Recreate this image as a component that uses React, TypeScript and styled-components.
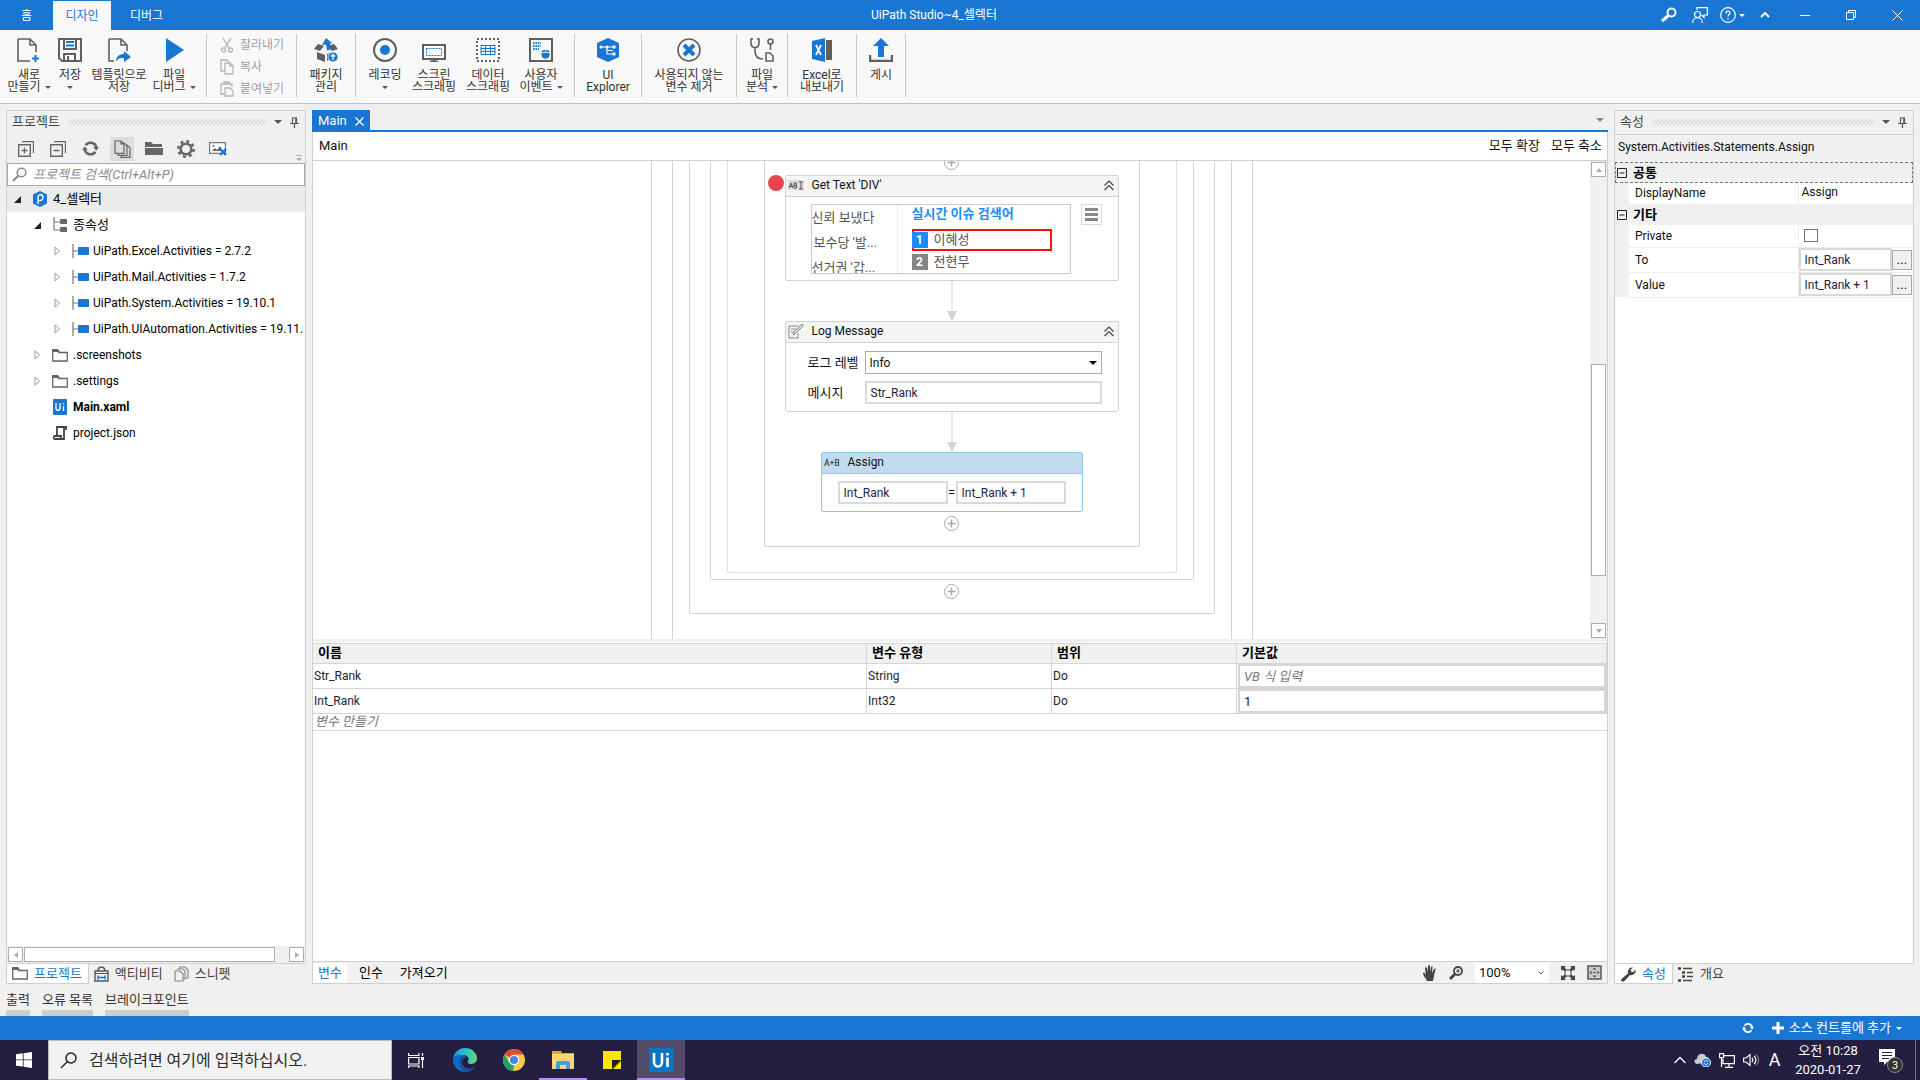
import React from "react";
import styled, { createGlobalStyle, css } from "styled-components";

const blue = "#1976d2";
const dark = "#5f5f5f";
const line = "#cfcfcf";
const panelBg = "#f0f0f0";
const ui = `Roboto, "Noto Sans CJK KR", sans-serif`;
const latin = css`font-size: 12px;`;

const Global = createGlobalStyle`
  * { box-sizing: border-box; }
  body { margin: 0; background: ${panelBg}; font-family: ${ui}; font-size: 13px; line-height: 16px; color: #111; }
  button, input, select { font: inherit; color: inherit; margin: 0; padding: 0; border: 0; background: none; border-radius: 0; outline: none; }
  button { white-space: nowrap; }
  svg { display: block; flex: none; }
  a { color: inherit; text-decoration: none; }
`;

const Page = styled.div`
  height: 100vh;
  display: flex;
  flex-direction: column;
  overflow: hidden;
  white-space: nowrap;
`;

/* ---------- title bar ---------- */
const TitleBar = styled.header`
  height: 30px;
  flex: none;
  display: flex;
  background: ${blue};
  color: #fff;
  font-size: 12px;
`;
const TitleTabs = styled.nav`
  display: flex;
  width: 213px;
  padding-top: 1px;
`;
const TitleTab = styled.button<{ $w: number; $on?: boolean }>`
  width: ${(p) => p.$w}px;
  text-align: center;
  ${(p) => p.$on && css`background: #f8f8f8; color: ${blue};`}
`;
const AppTitle = styled.h1`
  flex: 1;
  margin: 0;
  text-align: center;
  font-size: 12px;
  font-weight: 400;
  line-height: 30px;
`;
const TitleTools = styled.div`
  display: flex;
  align-items: center;
  width: 265px;
`;
const TitleTool = styled.button<{ $w: number }>`
  width: ${(p) => p.$w}px;
  height: 30px;
  display: flex;
  align-items: center;
  justify-content: center;
  gap: 3px;
`;

/* ---------- ribbon ---------- */
const Ribbon = styled.div`
  height: 74px;
  flex: none;
  display: flex;
  align-items: flex-start;
  background: #f8f8f8;
  border-bottom: 1px solid #bebebe;
  font-size: 12px;
  line-height: 12px;
  padding-top: 4px;
  color: #333;
`;
const RibbonGroup = styled.div<{ $l?: number; $r?: number }>`
  display: flex;
  height: 63px;
  padding: 0 ${(p) => p.$r ?? 0}px 0 ${(p) => p.$l ?? 0}px;
  border-right: 1px solid #c8c8c8;
`;
const RibbonBtn = styled.button<{ $w: number }>`
  width: ${(p) => p.$w}px;
  padding-top: 4px;
  display: flex;
  flex-direction: column;
  align-items: center;
  gap: 7px;
  line-height: 12px;
`;
const RibbonLabel = styled.span`
  display: flex;
  flex-direction: column;
  align-items: center;
`;
const LabelLine = styled.span`
  display: flex;
  align-items: center;
  height: 12px;
  gap: 4px;
`;
const ClipList = styled.div`
  display: flex;
  flex-direction: column;
  width: 89px;
  padding-left: 13px;
`;
const ClipBtn = styled.button`
  display: flex;
  flex: none;
  align-items: center;
  gap: 6px;
  height: 22px;
  color: #a0a0a0;
`;

/* ---------- workspace ---------- */
const Workspace = styled.main`
  flex: 1;
  min-height: 0;
  display: flex;
  gap: 6px;
  padding: 6px 6px 0;
`;
const SidePanel = styled.aside`
  width: 300px;
  flex: none;
  display: flex;
  flex-direction: column;
`;
const PanelBox = styled.section`
  flex: 1;
  min-height: 0;
  display: flex;
  flex-direction: column;
  border: 1px solid ${line};
  background: #fff;
`;
const PanelHead = styled.header`
  height: 23px;
  flex: none;
  display: flex;
  align-items: center;
  gap: 8px;
  padding: 0 6px 1px 5px;
  background: ${panelBg};
  color: #444;
`;
const Grip = styled.span`
  flex: 1;
  height: 6px;
  background-image: radial-gradient(circle, #a8a8a8 0.5px, transparent 0.8px), radial-gradient(circle, #a8a8a8 0.5px, transparent 0.8px);
  background-size: 4px 4px;
  background-position: 0 0, 2px 2px;
`;
const PanelTools = styled.div`
  height: 29px;
  flex: none;
  display: flex;
  align-items: center;
  padding: 0 3px 0 7px;
  background: ${panelBg};
`;
const PanelTool = styled.button<{ $on?: boolean }>`
  width: 24px;
  height: 24px;
  margin-right: 8px;
  display: flex;
  align-items: center;
  justify-content: center;
  background: ${(p) => (p.$on ? "#dcdcdc" : "transparent")};
`;
const ToolOverflow = styled.span`
  margin-left: auto;
  align-self: flex-end;
  padding-bottom: 2px;
`;
const SearchRow = styled.label`
  height: 23px;
  flex: none;
  display: flex;
  align-items: center;
  gap: 6px;
  padding-left: 4px;
  border: 1px solid #a8a8a8;
  background: #fff;
`;
const SearchInput = styled.input`
  flex: 1;
  min-width: 0;
  &::placeholder { color: #8a8a8a; font-style: italic; opacity: 1; }
`;
const Tree = styled.ul`
  flex: 1;
  min-height: 0;
  margin: 0;
  padding: 0;
  list-style: none;
  overflow: hidden;
`;
const TreeRow = styled.li<{ $level: number; $on?: boolean; $bold?: boolean; $latin?: boolean }>`
  height: 26px;
  display: flex;
  align-items: center;
  padding-left: ${(p) => 6 + p.$level * 20}px;
  background: ${(p) => (p.$on ? "#ebebeb" : "transparent")};
  font-weight: ${(p) => (p.$bold ? 700 : 400)};
  color: #000;
  ${(p) => p.$latin && latin}
`;
const TreeArrow = styled.span`
  width: 17px;
  flex: none;
  display: flex;
`;
const TreeIcon = styled.span`
  width: 23px;
  flex: none;
  display: flex;
  justify-content: center;
  padding-right: 3px;
`;
const HScroll = styled.div`
  height: 17px;
  flex: none;
  display: flex;
  gap: 1px;
  padding: 1px;
  background: ${panelBg};
`;
const ScrollBtn = styled.button`
  width: 15px;
  height: 15px;
  flex: none;
  display: flex;
  align-items: center;
  justify-content: center;
  border: 1px solid #acacac;
  background: #fff;
`;
const HTrack = styled.div`
  flex: 1;
  display: flex;
`;
const HThumb = styled.div`
  width: 95%;
  border: 1px solid #acacac;
  background: #fff;
`;
const DockTabs = styled.nav`
  height: 20px;
  flex: none;
  display: flex;
`;
const DockTab = styled.button<{ $on?: boolean }>`
  display: flex;
  align-items: center;
  gap: 6px;
  padding: 0 6px 0 5px;
  color: ${(p) => (p.$on ? blue : "#444")};
  ${(p) => p.$on && css`background: #fff; border: 1px solid ${line}; border-top: 0;`}
`;

/* ---------- designer ---------- */
const Center = styled.section`
  flex: 1;
  min-width: 0;
  display: flex;
  flex-direction: column;
`;
const DocTabs = styled.nav`
  height: 22px;
  flex: none;
  display: flex;
  align-items: center;
  justify-content: space-between;
  border-bottom: 2px solid ${blue};
  padding-right: 4px;
`;
const DocTab = styled.button`
  height: 22px;
  align-self: flex-start;
  display: flex;
  align-items: center;
  gap: 8px;
  padding: 0 6px;
  background: ${blue};
  color: #fff;
`;
const DocBody = styled.div`
  flex: 1;
  min-height: 0;
  display: flex;
  flex-direction: column;
  border: 1px solid ${line};
  border-top: 0;
  background: #fff;
`;
const Crumbs = styled.div`
  height: 29px;
  flex: none;
  display: flex;
  align-items: center;
  gap: 11px;
  padding: 0 5px 0 6px;
  border-bottom: 1px solid ${line};
`;
const CrumbMain = styled.a`
  margin-right: auto;
`;
const Designer = styled.div`
  height: 478px;
  flex: none;
  display: flex;
`;
const Canvas = styled.div`
  flex: 1;
  min-width: 0;
  overflow: hidden;
  display: flex;
  justify-content: center;
`;
const Scope = styled.div<{ $pad: number; $end?: number; $open?: boolean; $soft?: boolean }>`
  flex: none;
  display: flex;
  flex-direction: column;
  align-items: center;
  padding: 0 ${(p) => p.$pad}px ${(p) => p.$end ?? 0}px;
  border: 1px solid ${(p) => (p.$soft ? "#dedede" : "#d3d3d3")};
  border-top: 0;
  ${(p) => (p.$open ? css`border-bottom: 0; min-height: 100%;` : css`border-radius: 0 0 2px 2px;`)}
`;
const Steps = styled.div`
  width: 334px;
  margin-top: -6px;
  display: flex;
  flex-direction: column;
  align-items: center;
`;
const AddBtn = styled.button`
  display: flex;
  margin: 4px 0 5px;
`;
const FirstAdd = styled.button`
  display: flex;
  margin-bottom: 5px;
`;
const Card = styled.article<{ $sel?: boolean; $w?: string }>`
  position: relative;
  width: ${(p) => p.$w ?? "100%"};
  border: 1px solid ${(p) => (p.$sel ? "#94c3e3" : "#d3d3d3")};
  border-radius: 2px;
  background: #fff;
`;
const CardHead = styled.header<{ $sel?: boolean }>`
  height: 21px;
  display: flex;
  align-items: center;
  gap: 8px;
  padding: 0 4px 2px 2px;
  border-bottom: 1px solid ${(p) => (p.$sel ? "#94c3e3" : "#d3d3d3")};
  background: ${(p) => (p.$sel ? "#c1dcef" : "#f4f4f4")};
  color: #111;
  ${latin}
`;
const CardTitle = styled.span`
  flex: 1;
`;
const Breakpoint = styled.span`
  position: absolute;
  left: -18px;
  top: -1px;
  width: 16px;
  height: 16px;
  border-radius: 50%;
  background: #e8454f;
`;
const ShotBody = styled.div`
  display: flex;
  align-items: flex-start;
  gap: 10px;
  padding: 7px 16px 6px 25px;
`;
const Shot = styled.div`
  flex: 1;
  height: 70px;
  display: flex;
  overflow: hidden;
  border: 1px solid #cacaca;
  color: #555;
`;
const ShotNews = styled.div`
  width: 86px;
  flex: none;
  border-right: 1px solid #eee;
  line-height: 25px;
  overflow: hidden;
`;
const ShotCut = styled.div`
  text-indent: -10px;
`;
const ShotRank = styled.div`
  flex: 1;
  padding: 0 18px 0 14px;
`;
const ShotTitle = styled.div`
  color: #1a8cff;
  font-weight: 700;
  line-height: 18px;
  margin-bottom: 6px;
`;
const RankRow = styled.div<{ $hit?: boolean }>`
  height: 22px;
  display: flex;
  align-items: center;
  gap: 6px;
  ${(p) => (p.$hit ? css`box-shadow: inset 0 0 0 2px #f31212;` : "")}
`;
const RankNo = styled.b<{ $c: string }>`
  width: 16px;
  height: 16px;
  background: ${(p) => p.$c};
  color: #fff;
  font-size: 12px;
  line-height: 16px;
  text-align: center;
`;
const MenuBtn = styled.button`
  width: 21px;
  height: 21px;
  display: flex;
  align-items: center;
  justify-content: center;
  border: 1px solid #d5d9e4;
`;
const Connector = styled.div`
  height: 40px;
  display: flex;
`;
const LogBody = styled.div`
  display: grid;
  grid-template-columns: 57px 1fr;
  row-gap: 7px;
  align-items: center;
  padding: 8px 16px 7px 22px;
`;
const Field = styled.input`
  width: 100%;
  height: 23px;
  padding: 0 4px;
  border: 2px solid #d9d9d9;
  background: #fff;
  color: #24244a;
  ${latin}
`;
const SelectWrap = styled.span`
  display: flex;
  align-items: center;
  justify-content: flex-end;
  height: 23px;
  border: 1px solid #a8a8a8;
  padding-right: 4px;
`;
const LevelSelect = styled.select`
  flex: 1;
  height: 21px;
  padding-left: 4px;
  appearance: none;
  ${latin}
`;
const AssignBody = styled.div`
  display: grid;
  grid-template-columns: 1fr 8px 1fr;
  align-items: center;
  justify-items: center;
  padding: 7px 16px 7px;
`;

const VScroll = styled.div`
  width: 17px;
  flex: none;
  display: flex;
  flex-direction: column;
  padding: 1px;
  background: ${panelBg};
`;
const VTrack = styled.div`
  flex: 1;
  padding-top: 187px;
`;
const VThumb = styled.div`
  width: 15px;
  height: 212px;
  border: 1px solid #acacac;
  background: #fff;
`;
const Splitter = styled.div`
  height: 4px;
  flex: none;
  background: ${panelBg};
  border-bottom: 1px solid #fff;
`;

/* ---------- variables ---------- */
const VarTable = styled.table`
  width: 100%;
  table-layout: fixed;
  border-collapse: collapse;
  border-top: 1px solid ${line};
`;
const VarHead = styled.th`
  height: 20px;
  padding: 0 0 1px 5px;
  text-align: left;
  background: ${panelBg};
  border: 1px solid #d5d5d5;
  border-left: 0;
  color: #000;
`;
const VarCell = styled.td`
  height: 25px;
  padding: 0 0 0 1px;
  border: 1px solid #d5d5d5;
  border-left: 0;
  color: #223;
  ${latin}
`;
const VarInput = styled.input`
  display: block;
  width: 100%;
  height: 24px;
  padding: 0 4px;
  border: 2px solid #d5d5d5;
  font-size: 13px;
  &::placeholder { color: #777; font-style: italic; opacity: 1; }
`;
const VarNew = styled.td`
  height: 17px;
  padding: 0 0 0 2px;
  line-height: 14px;
  font-style: italic;
  color: #777;
  border-bottom: 1px solid #d5d5d5;
`;
const VarSpace = styled.div`
  flex: 1;
`;
const BottomBar = styled.div`
  height: 22px;
  flex: none;
  display: flex;
  align-items: center;
  background: ${panelBg};
  border-top: 1px solid ${line};
`;
const VarTab = styled.button<{ $on?: boolean }>`
  height: 20px;
  margin-right: 7px;
  padding: 0 5px;
  color: ${(p) => (p.$on ? blue : "#000")};
  background: ${(p) => (p.$on ? "#fff" : "transparent")};
`;
const ViewTools = styled.div`
  margin-left: auto;
  display: flex;
  align-items: center;
  gap: 12px;
  padding-right: 5px;
`;
const ToolBtn = styled.button`
  display: flex;
`;
const ZoomWrap = styled.span`
  display: flex;
  align-items: center;
  width: 74px;
  height: 20px;
  padding: 0 5px 0 4px;
  background: #fff;
`;
const ZoomSelect = styled.select`
  flex: 1;
  min-width: 0;
  appearance: none;
`;

/* ---------- properties ---------- */
const TypeName = styled.div`
  height: 28px;
  flex: none;
  padding: 0 3px;
  line-height: 25px;
  border-top: 1px solid ${line};
  background: ${panelBg};
  ${latin}
`;
const PropTable = styled.table`
  width: 100%;
  table-layout: fixed;
  border-collapse: collapse;
`;
const PropSection = styled.th<{ $focus?: boolean }>`
  height: 21px;
  padding: 0 2px;
  text-align: left;
  background: ${panelBg};
  outline: ${(p) => (p.$focus ? "1px dashed #777" : "0")};
  outline-offset: -1px;
`;
const SectionLabel = styled.span`
  display: flex;
  align-items: center;
  gap: 6px;
  color: #000;
`;
const Gutter = styled.td`
  padding: 0;
  background: ${panelBg};
`;
const PropName = styled.th<{ $h: number }>`
  height: ${(p) => p.$h}px;
  padding: 0 0 0 6px;
  text-align: left;
  font-weight: 400;
  border-right: 1px solid #ececec;
  border-bottom: 1px solid #ececec;
  ${latin}
`;
const PropValue = styled.td`
  padding: 0;
  border-bottom: 1px solid #ececec;
`;
const ValueRow = styled.span`
  display: flex;
  align-items: center;
`;
const PlainInput = styled.input`
  display: block;
  width: 100%;
  height: 18px;
  padding: 0 0 2px 3px;
  ${latin}
`;
const Check = styled.input`
  appearance: none;
  display: block;
  width: 14px;
  height: 13px;
  margin-left: 5px;
  border: 1px solid #707070;
  background: #fff;
`;
const PropInput = styled(Field)`
  flex: 1;
  min-width: 0;
`;
const MoreBtn = styled.button`
  width: 20px;
  height: 20px;
  margin-right: 1px;
  border: 1px solid #a8a8a8;
  background: ${panelBg};
`;

/* ---------- bottom strips ---------- */
const Strip = styled.nav`
  height: 32px;
  flex: none;
  display: flex;
  gap: 12px;
  padding: 6px 6px 0;
`;
const StripTab = styled.button`
  height: 26px;
  border-bottom: 6px solid #cdcdcd;
  line-height: 20px;
  color: #333;
`;
const StatusBar = styled.footer`
  height: 24px;
  flex: none;
  display: flex;
  align-items: center;
  justify-content: flex-end;
  gap: 18px;
  padding-right: 18px;
  background: ${blue};
  color: #fff;
`;
const StatusBtn = styled.button`
  display: flex;
  align-items: center;
  gap: 5px;
`;

/* ---------- taskbar ---------- */
const Taskbar = styled.footer`
  height: 40px;
  flex: none;
  display: flex;
  background: #241e40;
  color: #fff;
`;
const TaskBtn = styled.button<{ $on?: boolean; $run?: boolean }>`
  width: 48px;
  margin-right: 1px;
  display: flex;
  align-items: center;
  justify-content: center;
  background: ${(p) => (p.$on ? "#514a69" : "transparent")};
  box-shadow: ${(p) => (p.$run ? "inset 0 -2px 0 #b48ee8" : "none")};
`;
const StartBtn = styled.button`
  width: 48px;
  display: flex;
  align-items: center;
  justify-content: center;
`;
const TaskSearch = styled.label`
  width: 344px;
  display: flex;
  align-items: center;
  gap: 12px;
  padding-left: 11px;
  background: #f2f2f2;
  border: 1px solid #bbb;
  font-size: 16px;
`;
const TaskInput = styled.input`
  flex: 1;
  min-width: 0;
  &::placeholder { color: #2b2b2b; opacity: 1; }
`;
const Tray = styled.div`
  margin-left: auto;
  display: flex;
  align-items: center;
  gap: 8px;
`;
const Ime = styled.span`
  width: 13px;
  font-size: 18px;
  line-height: 20px;
  text-align: center;
`;
const Clock = styled.time`
  width: 78px;
  font-size: 13px;
  line-height: 19px;
  text-align: center;
`;
const NoteBtn = styled.button`
  display: flex;
  padding-left: 4px;
  margin-right: 3px;
`;
const Peek = styled.span`
  width: 5px;
  height: 40px;
  border-left: 1px solid #77728a;
`;

/* ---------- drawings ---------- */
type SP = React.SVGProps<SVGSVGElement> & { w: number; h?: number; box?: string };
const S = ({ w, h, box, children, ...r }: SP) => (
  <svg width={w} height={h ?? w} viewBox={box ?? `0 0 ${w} ${h ?? w}`} fill="none" aria-hidden="true" {...r}>{children}</svg>
);
const Caret = ({ c = "#555", w = 6 }: { c?: string; w?: number }) => (
  <S w={w} h={w / 2} box="0 0 6 3"><path d="M0 0h6L3 3z" fill={c} /></S>
);
const sheet = "M1 1h12l6 6v7M1 1v22h12M13 1v6h6";
const I = {
  newFile: <S w={24} stroke={dark} strokeWidth="1.600"><path d={sheet} /><path d="M15 20.500h7M18.500 17v7" stroke={blue} strokeWidth="2" /></S>,
  save: <S w={24} stroke={dark} strokeWidth="2"><path d="M1 1h22v22H4l-3-3zM6 1v10h12V1M6 23v-7h11v7M10 18v5" /><path d="M8 4h8M8 7.500h8" stroke={blue} /></S>,
  template: <S w={24} stroke={dark} strokeWidth="1.600"><path d="M2 1h12l6 6v6M2 1v22h5M14 1v6h6" /><path d="M9 24c0-6 4-8 8-8v-3l7 6-7 5v-4c-4 0-6 0-8 4z" fill={blue} stroke="none" /></S>,
  play: <S w={24}><path d="M4 0v24l18-12z" fill={blue} /></S>,
  cut: <S w={14} h={16} stroke="#b5b5b5" strokeWidth="1.300"><path d="M3 1l6 10M11 1L5 11" /><circle cx="3.500" cy="13" r="2" /><circle cx="10.500" cy="13" r="2" /></S>,
  copy: <S w={14} h={16} stroke="#b5b5b5" strokeWidth="1.300"><path d="M5 12H1V1h6l2 2" /><path d="M5 4h5l3 3v8H5zM10 4v3h3" /></S>,
  paste: <S w={14} h={16} stroke="#b5b5b5" strokeWidth="1.300"><path d="M4 13H1V3h11v3M4 3V1h5v2" /><path d="M5 7h5l3 3v5H5z" /></S>,
  pack: <S w={24}><path d="M0 11l4-5 6 2-4 5zM24 11l-4-5-6 2 4 5zM3 14l8 3v7l-8-3zM13 16l3-1v6l-3 2z" fill={dark} /><path d="M8 7l4-7 6 5-2 .500 1 6-4 1-1-6z" fill={blue} /><circle cx="19" cy="19" r="5" fill={blue} stroke="#f8f8f8" strokeWidth=".8" /><path d="M19 22v-5M17 18.500l2-2 2 2" stroke="#fff" strokeWidth="1.300" /></S>,
  rec: <S w={24}><circle cx="12" cy="12" r="11" stroke={dark} strokeWidth="2" /><circle cx="12" cy="12" r="5" fill={blue} /></S>,
  screen: <S w={24}><path d="M1 7h22v14H1z" stroke={dark} strokeWidth="2" /><path d="M4.500 10.500h15v7h-15z" stroke={blue} strokeDasharray="2 1" /><path d="M8 23.500h8M12 21v2" stroke={dark} strokeWidth="2" /></S>,
  data: <S w={24}><path d="M1 1h22v22H1z" stroke={dark} strokeWidth="2" strokeDasharray="2 2" /><path d="M5 7.500h14v9H5zM5 10.500h14M5 13.500h14M9.500 7.500v9M14.500 7.500v9" stroke={blue} /></S>,
  user: <S w={24}><path d="M1 1h22v22H1z" stroke={dark} strokeWidth="2" /><path d="M4 5h8M4 8h8M4 11h6" stroke={blue} strokeWidth="2" strokeDasharray="1.500 1" /><path d="M12.500 14c0-3 8-3 8 0v3c0 5-8 5-8 0z" fill={blue} /><path d="M12 14.500h9M16.500 11v3" stroke="#fff" strokeWidth=".8" /></S>,
  explorer: <S w={24}><path d="M12 0l11 5v14l-11 5-11-5V5z" fill={blue} /><path d="M5 9h13M11 9v7h7M11 12.500h6" stroke="#fff" strokeWidth="1.200" /><g fill="#fff"><circle cx="5" cy="9" r="1.500" /><circle cx="11" cy="9" r="1.500" /><circle cx="18" cy="9" r="1.700" /><circle cx="18" cy="16" r="1.700" /></g></S>,
  unused: <S w={24}><circle cx="12" cy="12" r="11" stroke={dark} strokeWidth="1.600" /><path d="M7 7l10 10M17 7L7 17" stroke={blue} strokeWidth="4" /></S>,
  analyze: <S w={24} stroke={dark} strokeWidth="1.600"><path d="M3 1H1v4c0 6 8 6 8 0V1H7M5 10v3c0 5 3 8 8 8" /><circle cx="20.500" cy="3.500" r="2.500" /><path d="M20.500 6v6M16 15h4l3 3v5h-7z" /></S>,
  excel: <S w={24}><path d="M2 3l13-3v24L2 21z" fill={blue} /><path d="M16 2h6v20h-6z" fill={dark} /><path d="M6 7l5 10M11 7L6 17" stroke="#fff" strokeWidth="1.800" /></S>,
  publish: <S w={24}><path d="M12 0l8 8h-5v11H9V8H4z" fill={blue} /><path d="M1 17v6h22v-6" stroke={dark} strokeWidth="2.500" /></S>,
  pin: <S w={9} h={11} stroke="#555" strokeWidth="1.200"><path d="M2.500 6V1h4v5M0 6.500h9M4.500 7v4M5.800 1v5" /></S>,
  search: <S w={15} stroke="#8a8a8a" strokeWidth="1.500"><circle cx="9.500" cy="5.500" r="4.300" /><path d="M6.500 8.500L1 14" strokeWidth="2" /></S>,
  folder: <S w={16} h={13}><path d="M.75 11.500V1.500h5l1 2h8.500v8.500H.75z" stroke="#666" strokeWidth="1.300" /><path d="M0 0h6l2 3H0z" fill="#666" /></S>,
  dep: <S w={17} h={14}><path d="M1 0v14M1 7h6" stroke="#777" strokeWidth="1.200" /><rect x="6" y="3" width="11" height="8" rx="1" fill={blue} /></S>,
  fit: <S w={14}><path d="M0 0h5L3.500 1.500l2 2-2 2-2-2L0 5zM14 0v5l-1.500-1.500-2 2-2-2 2-2L9 0zM0 14V9l1.500 1.500 2-2 2 2-2 2L5 14zM14 14H9l1.500-1.500-2-2 2-2 2 2L14 9z" fill="#444" /><path d="M4 4h6v6H4z" stroke="#444" /></S>,
};
const Refresh = ({ c, w }: { c: string; w: number }) => (
  <S w={w} box="0 0 16 16"><path d="M13.500 7A5.600 5.600 0 0 0 3.400 5M2.500 9a5.600 5.600 0 0 0 10.100 2" stroke={c} strokeWidth="2.400" /><path d="M10.500 6.500H16L13.500 10zM5.500 9.500H0L2.500 6z" fill={c} /></S>
);
const Plus = () => (
  <S w={15} stroke="#a8a8a8"><circle cx="7.500" cy="7.500" r="7" /><path d="M3.500 7.500h8M7.500 3.500v8" strokeWidth="1.500" /></S>
);
const Arrow = () => (
  <Connector><S w={10} h={40}><path d="M5 0v31" stroke="#e8e8e8" strokeWidth="2" /><path d="M0 30h10L5 40z" fill="#d3d3d3" /></S></Connector>
);
const Collapse = () => (
  <ToolBtn aria-label="collapse"><S w={10} h={11} stroke="#445" strokeWidth="1.200"><path d="M.5 5.500L5 1l4.500 4.500M.5 10L5 5.500 9.500 10" /></S></ToolBtn>
);
const Tri = ({ d }: { d: string }) => <S w={6}><path d={d} fill="#aaa" /></S>;

const RB = ({ w, icon, lines, caret }: { w: number; icon: React.ReactNode; lines: string[]; caret?: "end" | "below" }) => (
  <RibbonBtn $w={w}>
    {icon}
    <RibbonLabel>
      {lines.map((t, i) => <LabelLine key={t}>{t}{caret === "end" && i === lines.length - 1 && <Caret />}</LabelLine>)}
      {caret === "below" && <LabelLine><Caret /></LabelLine>}
    </RibbonLabel>
  </RibbonBtn>
);

type Node = { level: number; label: string; icon: React.ReactNode; open?: boolean; leaf?: boolean; on?: boolean; bold?: boolean; ko?: boolean };
const nodes: Node[] = [
  { level: 0, label: "4_셀렉터", ko: true, open: true, on: true, icon: <S w={14} h={16}><path d="M7 0l7 3.500v9L7 16l-7-3.500v-9z" fill={blue} /><path d="M5 13V6c0-3 5-3 5 .500S6 10 5 9" stroke="#fff" strokeWidth="1.400" /></S> },
  { level: 1, label: "종속성", ko: true, open: true, icon: <S w={15} h={16}><path d="M1 0v13h6M1 5h6" stroke="#777" strokeWidth="1.200" /><rect x="7" y="2" width="7" height="5" rx="1" fill="#666" /><rect x="7" y="10" width="7" height="5" rx="1" fill="#666" /></S> },
  { level: 2, label: "UiPath.Excel.Activities = 2.7.2", icon: I.dep },
  { level: 2, label: "UiPath.Mail.Activities = 1.7.2", icon: I.dep },
  { level: 2, label: "UiPath.System.Activities = 19.10.1", icon: I.dep },
  { level: 2, label: "UiPath.UIAutomation.Activities = 19.11.", icon: I.dep },
  { level: 1, label: ".screenshots", icon: I.folder },
  { level: 1, label: ".settings", icon: I.folder },
  { level: 1, label: "Main.xaml", leaf: true, bold: true, icon: <S w={14} h={16}><rect width="14" height="16" rx="1" fill={blue} /><path d="M3 4v5c0 3 4 3 4 0V4M10.500 7v5M10.500 4v1.500" stroke="#fff" strokeWidth="1.300" /></S> },
  { level: 1, label: "project.json", leaf: true, icon: <S w={14} h={14} stroke="#444" strokeWidth="1.800"><path d="M4 10V1h9v3M11 1v12H2c-2 0-2-3 0-3h6v3" /></S> },
];

const vars = [
  { name: "Str_Rank", type: "String", value: "" },
  { name: "Int_Rank", type: "Int32", value: "1" },
];

const Minus = () => <S w={10}><path d="M.5.500h9v9h-9zM2.500 5h5" stroke="#222" /></S>;

const PanelHeader = ({ title }: { title: string }) => (
  <PanelHead>{title}<Grip /><Caret w={8} />{I.pin}</PanelHead>
);

export default function App() {
  return (
    <Page>
      <Global />
      <TitleBar>
        <TitleTabs>
          <TitleTab $w={53}>홈</TitleTab>
          <TitleTab $w={58} $on>디자인</TitleTab>
          <TitleTab $w={71}>디버그</TitleTab>
        </TitleTabs>
        <AppTitle>UiPath Studio~4_셀렉터</AppTitle>
        <TitleTools>
          <TitleTool $w={28} aria-label="search"><S w={16} stroke="#fff"><circle cx="10.500" cy="5.500" r="4" strokeWidth="2" /><path d="M7.500 8.500L1 14" strokeWidth="3" /></S></TitleTool>
          <TitleTool $w={34} aria-label="feedback"><S w={16} stroke="#fff" strokeWidth="1.200"><circle cx="5.500" cy="7.500" r="3" /><path d="M.6 16c0-7 9.800-7 9.800 0M5 3V.600h10.400V8H12v2.500L9.500 8" /></S></TitleTool>
          <TitleTool $w={30} aria-label="help"><S w={16} stroke="#fff" strokeWidth="1.200"><circle cx="8" cy="8" r="7.300" /><path d="M6 6.500c0-3 4-3 4-.500 0 1.500-2 1.500-2 3.500M8 11v1.500" /></S><Caret c="#fff" /></TitleTool>
          <TitleTool $w={35} aria-label="fold"><S w={10} h={6} stroke="#fff" strokeWidth="2"><path d="M1 5l4-4 4 4" /></S></TitleTool>
          <TitleTool $w={46} aria-label="minimize"><S w={10} stroke="#fff"><path d="M0 5.500h10" /></S></TitleTool>
          <TitleTool $w={46} aria-label="restore"><S w={10} stroke="#fff"><path d="M.5 2.500h7v7h-7zM2.500 2.500v-2h7v7h-2" /></S></TitleTool>
          <TitleTool $w={46} aria-label="close"><S w={11} stroke="#fff"><path d="M.5.500l10 10M10.500.500l-10 10" /></S></TitleTool>
        </TitleTools>
      </TitleBar>

      <Ribbon>
        <RibbonGroup $l={8} $r={6}>
          <RB w={42} icon={I.newFile} lines={["새로", "만들기"]} caret="end" />
          <RB w={40} icon={I.save} lines={["저장"]} caret="below" />
          <RB w={58} icon={I.template} lines={["템플릿으로", "저장"]} />
          <RB w={52} icon={I.play} lines={["파일", "디버그"]} caret="end" />
        </RibbonGroup>
        <RibbonGroup>
          <ClipList>
            <ClipBtn disabled>{I.cut}잘라내기</ClipBtn>
            <ClipBtn disabled>{I.copy}복사</ClipBtn>
            <ClipBtn disabled>{I.paste}붙여넣기</ClipBtn>
          </ClipList>
        </RibbonGroup>
        <RibbonGroup><RB w={58} icon={I.pack} lines={["패키지", "관리"]} /></RibbonGroup>
        <RibbonGroup $l={3} $r={11}>
          <RB w={52} icon={I.rec} lines={["레코딩"]} caret="below" />
          <RB w={46} icon={I.screen} lines={["스크린", "스크래핑"]} />
          <RB w={62} icon={I.data} lines={["데이터", "스크래핑"]} />
          <RB w={44} icon={I.user} lines={["사용자", "이벤트"]} caret="end" />
        </RibbonGroup>
        <RibbonGroup><RB w={66} icon={I.explorer} lines={["UI", "Explorer"]} /></RibbonGroup>
        <RibbonGroup><RB w={94} icon={I.unused} lines={["사용되지 않는", "변수 제거"]} /></RibbonGroup>
        <RibbonGroup><RB w={50} icon={I.analyze} lines={["파일", "분석"]} caret="end" /></RibbonGroup>
        <RibbonGroup><RB w={68} icon={I.excel} lines={["Excel로", "내보내기"]} /></RibbonGroup>
        <RibbonGroup><RB w={48} icon={I.publish} lines={["게시"]} /></RibbonGroup>
      </Ribbon>

      <Workspace>
        <SidePanel>
          <PanelBox>
            <PanelHeader title="프로젝트" />
            <PanelTools>
              <PanelTool aria-label="expand all"><S w={16} stroke="#666"><path d="M.7 3.700h11.600v11.600H.7z" strokeWidth="1.400" /><path d="M4 .500h11.500V12M3.500 9.500h6M6.500 6.500v6" strokeWidth="1.300" /></S></PanelTool>
              <PanelTool aria-label="collapse all"><S w={16} stroke="#666"><path d="M.7 3.700h11.600v11.600H.7z" strokeWidth="1.400" /><path d="M4 .500h11.500V12M3.500 9.500h6" strokeWidth="1.300" /></S></PanelTool>
              <PanelTool aria-label="refresh"><Refresh c="#666" w={17} /></PanelTool>
              <PanelTool $on aria-label="show all"><S w={17} h={18} stroke="#666" strokeWidth="1.200"><path d="M7 5h6l3 3v9.400H7z" fill="#dcdcdc" /><path d="M4 3h6l3 3v9.400H4z" fill="#dcdcdc" /><path d="M1 1h6l3 3v9.400H1zM7 1v3h3" fill="#dcdcdc" /></S></PanelTool>
              <PanelTool aria-label="open folder"><S w={18} h={13}><path d="M0 0h6l2 2h9v3H0zM0 6h18v7H0z" fill="#666" /></S></PanelTool>
              <PanelTool aria-label="settings"><S w={18}><circle cx="9" cy="9" r="5.300" stroke="#666" strokeWidth="2.600" /><circle cx="9" cy="9" r="7.700" stroke="#666" strokeWidth="2.600" strokeDasharray="3 3.050" /></S></PanelTool>
              <PanelTool aria-label="remove images"><S w={18} h={14}><path d="M.6.600h15.800v10.800H.6z" stroke="#777" strokeWidth="1.200" fill="#fff" /><path d="M3 9l3-3 2 2 3-4 3 5z" fill="#666" /><circle cx="4.500" cy="4" r="1" fill={blue} /><path d="M11 7l6 6M17 7l-6 6" stroke={blue} strokeWidth="2.400" /></S></PanelTool>
              <ToolOverflow><S w={6}><path d="M0 0h6v1H0zM0 3h6L3 6z" fill="#aaa" /></S></ToolOverflow>
            </PanelTools>
            <SearchRow>{I.search}<SearchInput aria-label="프로젝트 검색" placeholder="프로젝트 검색(Ctrl+Alt+P)" /></SearchRow>
            <Tree>
              {nodes.map((n) => (
                <TreeRow key={n.label} $level={n.level} $on={n.on} $bold={n.bold} $latin={!n.ko}>
                  <TreeArrow>
                    {!n.leaf && (n.open
                      ? <S w={8}><path d="M8 1v7H1z" fill="#222" /></S>
                      : <S w={8} h={10} stroke="#999"><path d="M2 1l4.500 4L2 9z" /></S>)}
                  </TreeArrow>
                  <TreeIcon>{n.icon}</TreeIcon>
                  {n.label}
                </TreeRow>
              ))}
            </Tree>
            <HScroll>
              <ScrollBtn aria-label="left"><Tri d="M5 0v6L1 3z" /></ScrollBtn>
              <HTrack><HThumb /></HTrack>
              <ScrollBtn aria-label="right"><Tri d="M1 0v6l4-3z" /></ScrollBtn>
            </HScroll>
          </PanelBox>
          <DockTabs>
            <DockTab $on>{I.folder}프로젝트</DockTab>
            <DockTab><S w={15} h={16}><path d="M1 5h13v10H1zM4 5c0-5 7-5 7 0" stroke="#555" strokeWidth="1.400" /><path d="M1 7.500h13" stroke="#555" /><path d="M4 11.500h7M4 9.500v4M11 9.500v4" stroke={blue} strokeWidth="1.500" /></S>액티비티</DockTab>
            <DockTab><S w={15} h={16} stroke="#888" strokeWidth="1.200"><path d="M6 3V1h5l3 3v8h-2M4 4V3h5l2 2v8H9" /><path d="M1 5h5l3 3v7H1z" fill="#f0f0f0" /></S>스니펫</DockTab>
          </DockTabs>
        </SidePanel>

        <Center>
          <DocTabs>
            <DocTab>Main<S w={9} stroke="#fff" strokeWidth="1.200"><path d="M.5.500l8 8M8.500.500l-8 8" /></S></DocTab>
            <Caret c="#888" w={8} />
          </DocTabs>
          <DocBody>
            <Crumbs><CrumbMain href="#main">Main</CrumbMain><ToolBtn>모두 확장</ToolBtn><ToolBtn>모두 축소</ToolBtn></Crumbs>
            <Designer>
              <Canvas>
                <Scope $pad={20} $open>
                  <Scope $pad={16} $open>
                    <Scope $pad={20} $end={9}>
                      <Scope $pad={16} $end={6}>
                        <Scope $pad={36} $end={25} $soft>
                          <Scope $pad={20} $end={10}>
                            <Steps>
                              <FirstAdd aria-label="add"><Plus /></FirstAdd>
                              <Card>
                                <Breakpoint />
                                <CardHead>
                                  <S w={16} h={10} stroke="#555"><rect width="16" height="10" fill="#ddd" stroke="none" /><path d="M1 8l2-5 2 5M2 6.500h2M6 3v5h2.500V3zM6 5.500h2.500M11 2h4M13 2v7M11 9h4" /></S>
                                  <CardTitle>Get Text 'DIV'</CardTitle><Collapse />
                                </CardHead>
                                <ShotBody>
                                  <Shot>
                                    <ShotNews><div>신뢰 보냈다</div><ShotCut>ㅓ보수당 '발...</ShotCut><div>선거권 '갑...</div></ShotNews>
                                    <ShotRank>
                                      <ShotTitle>실시간 이슈 검색어</ShotTitle>
                                      <RankRow $hit><RankNo $c="#1a8cff">1</RankNo>이혜성</RankRow>
                                      <RankRow><RankNo $c="#858585">2</RankNo>전현무</RankRow>
                                    </ShotRank>
                                  </Shot>
                                  <MenuBtn aria-label="options"><S w={13} h={13}><path d="M0 1.500h13M0 6.500h13M0 11.500h13" stroke="#888" strokeWidth="3" /></S></MenuBtn>
                                </ShotBody>
                              </Card>
                              <Arrow />
                              <Card>
                                <CardHead>
                                  <S w={16} h={16} stroke="#888"><path d="M10 3H1v12h9v-5M3 6h5M3 9h3" /><path d="M5 12l1-3 8-8 1.500 1.500-8 8z" fill="#ddd" /></S>
                                  <CardTitle>Log Message</CardTitle><Collapse />
                                </CardHead>
                                <LogBody>
                                  <label htmlFor="level">로그 레벨</label>
                                  <SelectWrap><LevelSelect id="level"><option>Info</option></LevelSelect><Caret c="#000" w={8} /></SelectWrap>
                                  <label htmlFor="msg">메시지</label>
                                  <Field id="msg" defaultValue="Str_Rank" />
                                </LogBody>
                              </Card>
                              <Arrow />
                              <Card $sel $w="262px">
                                <CardHead $sel>
                                  <S w={16} h={8} stroke="#555" strokeWidth="1.200"><path d="M.5 8L3 1.500 5 8M1.500 6H4M11.500 1.500V7.500H14.500V1.500zM11.500 4.500h3M6 4.500h4M8 2.500v4" /></S>
                                  <CardTitle>Assign</CardTitle>
                                </CardHead>
                                <AssignBody>
                                  <Field aria-label="to" defaultValue="Int_Rank" />=<Field aria-label="value" defaultValue="Int_Rank + 1" />
                                </AssignBody>
                              </Card>
                              <AddBtn aria-label="add"><Plus /></AddBtn>
                            </Steps>
                          </Scope>
                        </Scope>
                      </Scope>
                      <AddBtn aria-label="add"><Plus /></AddBtn>
                    </Scope>
                  </Scope>
                </Scope>
              </Canvas>
              <VScroll>
                <ScrollBtn aria-label="up"><Tri d="M0 5h6L3 1z" /></ScrollBtn>
                <VTrack><VThumb /></VTrack>
                <ScrollBtn aria-label="down"><Tri d="M0 1h6L3 5z" /></ScrollBtn>
              </VScroll>
            </Designer>
            <Splitter />
            <VarTable>
              <colgroup><col width="42.8%" /><col width="14.3%" /><col width="14.3%" /><col width="28.6%" /></colgroup>
              <thead><tr><VarHead>이름</VarHead><VarHead>변수 유형</VarHead><VarHead>범위</VarHead><VarHead>기본값</VarHead></tr></thead>
              <tbody>
                {vars.map((v) => (
                  <tr key={v.name}>
                    <VarCell>{v.name}</VarCell><VarCell>{v.type}</VarCell><VarCell>Do</VarCell>
                    <VarCell><VarInput aria-label={v.name} defaultValue={v.value} placeholder="VB 식 입력" /></VarCell>
                  </tr>
                ))}
                <tr><VarNew colSpan={4}>변수 만들기</VarNew></tr>
              </tbody>
            </VarTable>
            <VarSpace />
            <BottomBar>
              <VarTab $on>변수</VarTab><VarTab>인수</VarTab><VarTab>가져오기</VarTab>
              <ViewTools>
                <ToolBtn aria-label="pan"><S w={14} h={16}><path d="M4 16c-1-3-4-5-4-8 1-1 2 0 3 2L2 3c0-1 1.500-1 2 0l1 4V1c0-1 2-1 2 0v6l1-5c.5-1 2-1 1.500.500L9 8l2-4c.5-1 2-.500 1.500.500L11 11c0 2-1 3-1 5z" fill="#444" /></S></ToolBtn>
                <ToolBtn aria-label="zoom"><S w={14} stroke="#444"><circle cx="9" cy="5" r="4" strokeWidth="1.800" /><path d="M6 8l-5 5" strokeWidth="2.800" /><path d="M7 5h4M9 3v4" /></S></ToolBtn>
                <ZoomWrap><ZoomSelect aria-label="zoom level"><option>100%</option></ZoomSelect><S w={6} h={4} stroke="#555"><path d="M.5.500L3 3 5.500.500" /></S></ZoomWrap>
                <ToolBtn aria-label="fit">{I.fit}</ToolBtn>
                <ToolBtn aria-label="overview"><S w={15}><path d="M1 1h13v13H1z" stroke="#555" strokeWidth="1.500" fill="#ccc" /><path d="M7.500 2.500l2 2h-4zM7.500 12.500l2-2h-4zM2.500 7.500l2-2v4zM12.500 7.500l-2-2v4zM6 7h3v1H6z" fill="#444" /></S></ToolBtn>
              </ViewTools>
            </BottomBar>
          </DocBody>
        </Center>

        <SidePanel>
          <PanelBox>
            <PanelHeader title="속성" />
            <TypeName>System.Activities.Statements.Assign</TypeName>
            <PropTable>
              <colgroup><col width="14" /><col /><col width="115" /></colgroup>
              <tbody>
                <tr><PropSection colSpan={3} $focus><SectionLabel><Minus />공통</SectionLabel></PropSection></tr>
                <tr><Gutter /><PropName $h={21}>DisplayName</PropName><PropValue><PlainInput aria-label="DisplayName" defaultValue="Assign" /></PropValue></tr>
                <tr><PropSection colSpan={3}><SectionLabel><Minus />기타</SectionLabel></PropSection></tr>
                <tr><Gutter /><PropName $h={22}><label htmlFor="priv">Private</label></PropName><PropValue><Check type="checkbox" id="priv" /></PropValue></tr>
                <tr><Gutter /><PropName $h={25}>To</PropName><PropValue><ValueRow><PropInput aria-label="To" defaultValue="Int_Rank" /><MoreBtn>...</MoreBtn></ValueRow></PropValue></tr>
                <tr><Gutter /><PropName $h={25}>Value</PropName><PropValue><ValueRow><PropInput aria-label="Value" defaultValue="Int_Rank + 1" /><MoreBtn>...</MoreBtn></ValueRow></PropValue></tr>
              </tbody>
            </PropTable>
          </PanelBox>
          <DockTabs>
            <DockTab $on><S w={16}><path d="M1.500 13L8 7.500C7 4 9.500 1 13 1.500l-2.500 2.500 1 1.700 2 .3L15.500 3.500C16.500 7 13.500 10 10 9l-5.500 6c-2 1.500-4.500 0-3-2z" fill="#4b4434" /></S>속성</DockTab>
            <DockTab><S w={16} h={15} stroke="#4b4434"><path d="M0 1.500h3M4 5.500h3M4 9.500h3M0 13.500h3" strokeWidth="2.400" /><path d="M5 1.500h9M9 5.500h6M9 9.500h6M5 13.500h9" strokeWidth="1.400" /></S>개요</DockTab>
          </DockTabs>
        </SidePanel>
      </Workspace>

      <Strip><StripTab>출력</StripTab><StripTab>오류 목록</StripTab><StripTab>브레이크포인트</StripTab></Strip>

      <StatusBar>
        <StatusBtn aria-label="sync"><Refresh c="#fff" w={12} /></StatusBtn>
        <StatusBtn><S w={12} stroke="#fff" strokeWidth="3"><path d="M0 6h12M6 0v12" /></S>소스 컨트롤에 추가 <Caret c="#fff" /></StatusBtn>
      </StatusBar>

      <Taskbar>
        <StartBtn aria-label="start"><S w={16}><path d="M0 2.300l6.800-1v6.200H0zM7.600 1.200L16 0v7.500H7.600zM0 8.300h6.800v6.300L0 13.700zM7.600 8.300H16V16l-8.400-1.200z" fill="#fff" /></S></StartBtn>
        <TaskSearch>
          <S w={17} stroke="#222" strokeWidth="1.500"><circle cx="11" cy="6" r="5" /><path d="M7.500 9.500L1 16" /></S>
          <TaskInput aria-label="검색" placeholder="검색하려면 여기에 입력하십시오." />
        </TaskSearch>
        <TaskBtn aria-label="task view"><S w={16} h={15} stroke="#fff" strokeWidth="1.200"><path d="M.6 0v2.500h10.300V0M.6 4.500h10.300v6.500H.6zM.6 15v-2h10.300v2M14.500 0v3M14.500 7v8" /><path d="M13 4h3v3h-3z" fill="#fff" stroke="none" /></S></TaskBtn>
        <TaskBtn aria-label="edge">
          <S w={24}>
            <defs>
              <linearGradient id="eg" x1="0" x2="1"><stop stopColor="#1a9ae0" /><stop offset=".6" stopColor="#30c3c8" /><stop offset="1" stopColor="#6fdc58" /></linearGradient>
            </defs>
            <path d="M0 11C1 4 6 0 12 0c7 0 12 5 12 10 0 4-3 6-6 6s-4-1.500-3-3c2-3-1-6-5-6-5 0-9 1-10 4z" fill="url(#eg)" />
            <path d="M0 11c1-3 5-5 9-4 3 .600 4 2 4 2-5 1-6 8 0 11 3 1.500 6 1 9-1-2 3-6 5-10 5C5 24-.6 18 0 11z" fill="#0f6cc4" />
            <path d="M9 8c-5 4-3 12 3 16 4 0 8-2 10-5-3 2-6 2.500-9 1-5-2.500-5-8-1-10.500z" fill="#1a4f9c" />
          </S>
        </TaskBtn>
        <TaskBtn aria-label="chrome">
          <S w={22}>
            <circle cx="11" cy="11" r="11" fill="#fbc94a" />
            <path d="M11 11L1.500 5.500A11 11 0 0 1 20.500 5.500H11z" fill="#dd4b3e" />
            <path d="M1.500 5.500L6.500 14 11 16l-1 6A11 11 0 0 1 1.500 5.500z" fill="#1fa463" />
            <circle cx="11" cy="11" r="5.200" fill="#fff" /><circle cx="11" cy="11" r="4.100" fill="#4688f1" />
          </S>
        </TaskBtn>
        <TaskBtn $run aria-label="explorer">
          <S w={22} h={18}><path d="M0 0h9l1 2h12v16H0z" fill="#e9a820" /><path d="M0 3h22v15H0z" fill="#fcd66f" /><path d="M4 18v-6c0-1 1-2 2-2h10c1 0 2 1 2 2v6h-4v-4H8v4z" fill="#3f9fe0" /></S>
        </TaskBtn>
        <TaskBtn aria-label="notes"><S w={18}><path d="M0 0h18v9l-9 9H0z" fill="#ffe600" /><path d="M9 18V9h9z" fill="#222" /><path d="M10 18l8-8v8z" fill="#ffe600" /></S></TaskBtn>
        <TaskBtn $on $run aria-label="uipath"><S w={24}><path d="M0 0h24v24H0z" fill="#0b74c4" /><path d="M5 5v9c0 6 8 6 8 0V5M18.500 9.500V19M18.500 5v2.500" stroke="#fff" strokeWidth="2.600" /></S></TaskBtn>
        <Tray>
          <S w={12} h={8} stroke="#fff" strokeWidth="1.300"><path d="M.5 7L6 1.500 11.500 7" /></S>
          <S w={17} h={14}><path d="M3 11c-4-1-3-5 0-5 0-6 8-7 9-2 3 0 4 3 3 5z" fill="#c9c9d2" /><circle cx="12" cy="9.500" r="4.500" fill="#1976d2" stroke="#fff" /><path d="M10 9c1-2 3-2 4 0M14 10c-1 2-3 2-4 0" stroke="#fff" /></S>
          <S w={16} h={15} stroke="#fff" strokeWidth="1.200"><path d="M5 2.600h10.400v8H4V6M10 11v3M6 14.400h8M.6.600h4v4h-4zM2.500 5v9" /></S>
          <S w={17} h={14} stroke="#fff" strokeWidth="1.200"><path d="M.6 5v4h2.500L7 12.500v-11L3.100 5zM9 5c1 1 1 3 0 4M11 3c2.500 2 2.500 6 0 8" /><path d="M13 1.500c3.500 3 3.500 8 0 11" stroke="#777" /></S>
          <Ime>A</Ime>
          <Clock>오전 10:28<br />2020-01-27</Clock>
          <NoteBtn aria-label="notifications">
            <S w={25} h={26}><path d="M0 2h16v13H8l-3 3v-3H0z" fill="#fff" /><path d="M3 5.500h10M3 8.500h10M3 11.500h7" stroke="#241e40" /><circle cx="16" cy="18" r="7.500" fill="#333" stroke="#888" /><text x="16" y="22" fill="#fff" fontSize="11" textAnchor="middle">3</text></S>
          </NoteBtn>
          <Peek />
        </Tray>
      </Taskbar>
    </Page>
  );
}
